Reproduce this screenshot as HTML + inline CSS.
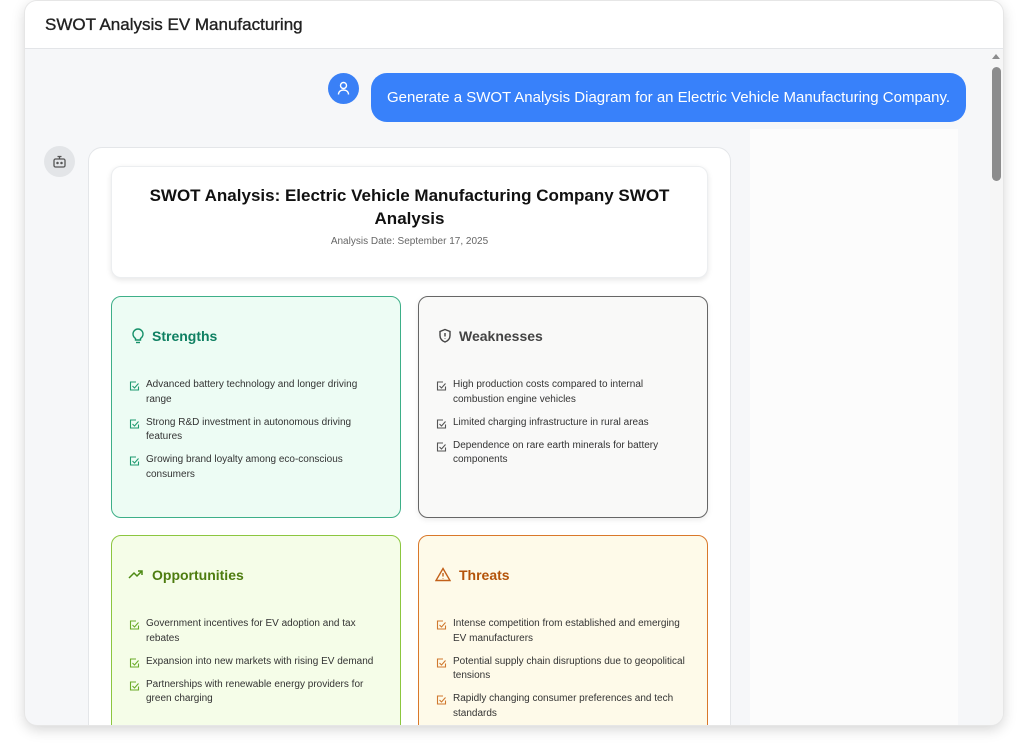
<!DOCTYPE html>
<html><head><meta charset="utf-8"><style>
*{box-sizing:border-box;margin:0;padding:0}
body{width:1024px;height:749px;background:#fff;font-family:"Liberation Sans",sans-serif;position:relative;overflow:hidden}
.win{position:absolute;left:25px;top:1px;width:978px;height:724px;border-radius:12px;background:#f6f7f9;overflow:hidden;box-shadow:0 0 0 1px #e6e6e6,0 4px 14px rgba(0,0,0,.18)}
.hdr{position:absolute;left:0;top:0;right:0;height:48px;background:#fff;border-bottom:1px solid #e3e5e8}
.hdr h1{position:absolute;left:20px;top:14px;font-size:17px;font-weight:400;color:#222;-webkit-text-stroke:.35px #222}
.track{position:absolute;left:965px;top:49px;width:13px;bottom:0;background:#f6f6f6}
.thumb{position:absolute;left:967px;top:66px;width:9px;height:114px;border-radius:5px;background:#8c8c8c}
.arr{position:absolute;left:967px;top:53px;width:0;height:0;border-left:4px solid transparent;border-right:4px solid transparent;border-bottom:5px solid #8c8c8c}
.ua{position:absolute;left:303px;top:72px;width:31px;height:31px;border-radius:50%;background:#3a80f6}
.bub{position:absolute;left:346px;top:72px;width:595px;height:49px;border-radius:16px;background:#3881fa;color:#fff;font-size:15px;line-height:49px;padding-left:16px}
.ba{position:absolute;left:19px;top:145px;width:31px;height:31px;border-radius:50%;background:#e3e5e8}
.pane{position:absolute;left:725px;top:128px;width:208px;height:600px;background:#fcfcfc}
.card{position:absolute;left:63px;top:146px;width:643px;height:600px;background:#fff;border:1px solid #e4e6e9;border-radius:14px}
.tc{position:absolute;left:22px;top:18px;width:597px;height:112px;border-radius:10px;background:#fff;border:1px solid #eceef0;box-shadow:0 2px 6px rgba(0,0,0,.1);text-align:center}
.tc h2{font-size:17px;font-weight:700;color:#111;line-height:23px;margin-top:17px;padding:0 24px}
.tc p{font-size:10px;color:#666;margin-top:6px}
.q{position:absolute;width:290px;height:222px;border-radius:10px;border:1.5px solid}
.q h3{position:absolute;left:40px;top:31px;font-size:14px;font-weight:700}
.q svg.hi{position:absolute;left:19px;top:31px}
.q ul{position:absolute;left:17px;top:81px;right:18px;list-style:none}
.q li{position:relative;padding-left:17px;font-size:10px;line-height:14.5px;color:#333;margin-bottom:8.5px}
.q li svg{position:absolute;left:0;top:3px}
</style></head><body>
<div class="win">
<div class="hdr"><h1>SWOT Analysis EV Manufacturing</h1></div>
<div class="pane"></div>
<div class="track"></div><div class="arr"></div><div class="thumb"></div>
<div class="ua"><svg width="31" height="31" viewBox="0 0 31 31" fill="none" stroke="#fff" stroke-width="1.4"><circle cx="15.5" cy="12.5" r="3"/><path d="M10.5 21.5c0-3 2.2-4.5 5-4.5s5 1.5 5 4.5"/></svg></div>
<div class="bub">Generate a SWOT Analysis Diagram for an Electric Vehicle Manufacturing Company.</div>
<div class="ba"><svg width="31" height="31" viewBox="0 0 31 31" fill="none" stroke="#555" stroke-width="1.3"><rect x="10" y="13" width="11" height="8" rx="1.5"/><path d="M15.5 13v-2.5M13.5 10.5h4"/><circle cx="13.5" cy="17" r=".6"/><circle cx="17.5" cy="17" r=".6"/></svg></div>
<div class="card">
<div class="tc"><h2>SWOT Analysis: Electric Vehicle Manufacturing Company SWOT Analysis</h2><p>Analysis Date: September 17, 2025</p></div>

<div class="q" style="left:22px;top:148px;background:#edfcf4;border-color:#3daf88">
<svg class="hi" width="14" height="16" viewBox="0 0 14 16" fill="none" stroke="#17916a" stroke-width="1.4"><path d="M4.5 10.5C3 9.4 2 7.8 2 6a5 5 0 0 1 10 0c0 1.8-1 3.4-2.5 4.5V12h-5z"/><path d="M5 14.5h4"/></svg>
<h3 style="color:#0f8062">Strengths</h3>
<ul>
<li><svg width="11" height="11" viewBox="0 0 11 11" fill="none" stroke="#1f9a70" stroke-width="1.1"><path d="M9.5 5.5v3.5h-8v-8h5.5"/><path d="M3.5 5l2 2 4-4.5"/></svg>Advanced battery technology and longer driving range</li>
<li><svg width="11" height="11" viewBox="0 0 11 11" fill="none" stroke="#1f9a70" stroke-width="1.1"><path d="M9.5 5.5v3.5h-8v-8h5.5"/><path d="M3.5 5l2 2 4-4.5"/></svg>Strong R&amp;D investment in autonomous driving features</li>
<li><svg width="11" height="11" viewBox="0 0 11 11" fill="none" stroke="#1f9a70" stroke-width="1.1"><path d="M9.5 5.5v3.5h-8v-8h5.5"/><path d="M3.5 5l2 2 4-4.5"/></svg>Growing brand loyalty among eco-conscious consumers</li>
</ul></div>

<div class="q" style="left:329px;top:148px;background:#f9f9f8;border-color:#666;box-shadow:0 2px 6px rgba(0,0,0,.08)">
<svg class="hi" width="14" height="16" viewBox="0 0 14 16" fill="none" stroke="#444" stroke-width="1.4"><path d="M7 1.5l5 2v4c0 3.5-2.5 5.5-5 6.5-2.5-1-5-3-5-6.5v-4z"/><path d="M7 5v3.5M7 10.5v.5"/></svg>
<h3 style="color:#444">Weaknesses</h3>
<ul>
<li><svg width="11" height="11" viewBox="0 0 11 11" fill="none" stroke="#555" stroke-width="1.1"><path d="M9.5 5.5v3.5h-8v-8h5.5"/><path d="M3.5 5l2 2 4-4.5"/></svg>High production costs compared to internal combustion engine vehicles</li>
<li><svg width="11" height="11" viewBox="0 0 11 11" fill="none" stroke="#555" stroke-width="1.1"><path d="M9.5 5.5v3.5h-8v-8h5.5"/><path d="M3.5 5l2 2 4-4.5"/></svg>Limited charging infrastructure in rural areas</li>
<li><svg width="11" height="11" viewBox="0 0 11 11" fill="none" stroke="#555" stroke-width="1.1"><path d="M9.5 5.5v3.5h-8v-8h5.5"/><path d="M3.5 5l2 2 4-4.5"/></svg>Dependence on rare earth minerals for battery components</li>
</ul></div>

<div class="q" style="left:22px;top:387px;background:#f5fde8;border-color:#8cc63f">
<svg class="hi" width="16" height="14" viewBox="0 0 16 14" fill="none" stroke="#4d8a12" stroke-width="1.5" style="left:16px"><path d="M1 11l5-5 3 3 5-5"/><path d="M10 4h4v4"/></svg>
<h3 style="color:#4d7c0f">Opportunities</h3>
<ul>
<li><svg width="11" height="11" viewBox="0 0 11 11" fill="none" stroke="#6aab2a" stroke-width="1.1"><path d="M9.5 5.5v3.5h-8v-8h5.5"/><path d="M3.5 5l2 2 4-4.5"/></svg>Government incentives for EV adoption and tax rebates</li>
<li><svg width="11" height="11" viewBox="0 0 11 11" fill="none" stroke="#6aab2a" stroke-width="1.1"><path d="M9.5 5.5v3.5h-8v-8h5.5"/><path d="M3.5 5l2 2 4-4.5"/></svg>Expansion into new markets with rising EV demand</li>
<li><svg width="11" height="11" viewBox="0 0 11 11" fill="none" stroke="#6aab2a" stroke-width="1.1"><path d="M9.5 5.5v3.5h-8v-8h5.5"/><path d="M3.5 5l2 2 4-4.5"/></svg>Partnerships with renewable energy providers for green charging</li>
</ul></div>

<div class="q" style="left:329px;top:387px;background:#fefae9;border-color:#d9782a">
<svg class="hi" width="16" height="15" viewBox="0 0 16 15" fill="none" stroke="#c2601a" stroke-width="1.4" style="left:16px"><path d="M8 1.5L15 13.5H1z"/><path d="M8 6v3.5M8 11.3v.4"/></svg>
<h3 style="color:#b45309">Threats</h3>
<ul>
<li><svg width="11" height="11" viewBox="0 0 11 11" fill="none" stroke="#d0782e" stroke-width="1.1"><path d="M9.5 5.5v3.5h-8v-8h5.5"/><path d="M3.5 5l2 2 4-4.5"/></svg>Intense competition from established and emerging EV manufacturers</li>
<li><svg width="11" height="11" viewBox="0 0 11 11" fill="none" stroke="#d0782e" stroke-width="1.1"><path d="M9.5 5.5v3.5h-8v-8h5.5"/><path d="M3.5 5l2 2 4-4.5"/></svg>Potential supply chain disruptions due to geopolitical tensions</li>
<li><svg width="11" height="11" viewBox="0 0 11 11" fill="none" stroke="#d0782e" stroke-width="1.1"><path d="M9.5 5.5v3.5h-8v-8h5.5"/><path d="M3.5 5l2 2 4-4.5"/></svg>Rapidly changing consumer preferences and tech standards</li>
</ul></div>
</div>
</div>
</body></html>
